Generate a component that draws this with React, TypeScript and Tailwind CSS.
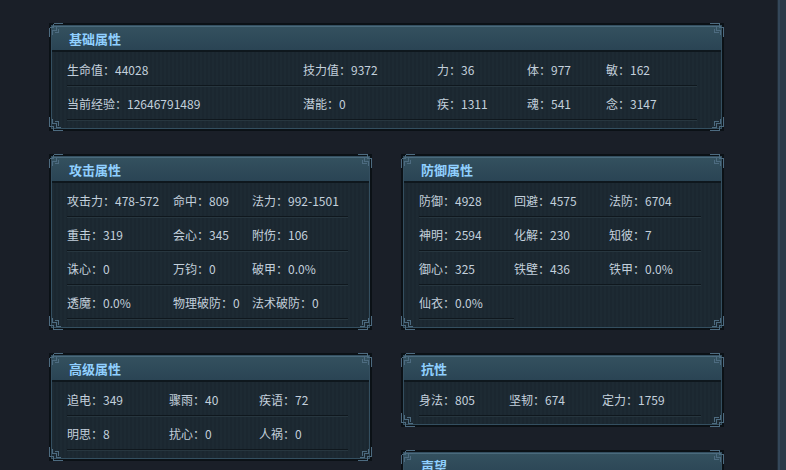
import React from 'react';

type Stat = [string, string];

function Corner({ className }: { className: string }) {
  return (
    <svg
      className={`absolute h-[14px] w-[14px] ${className}`}
      viewBox="0 0 14 14"
      fill="none"
      stroke="#4d6b80"
      strokeWidth="1"
      shapeRendering="crispEdges"
    >
      <path d="M0 0H14V2H2V14H0Z" fill="#0b1116" stroke="none" />
      <path d="M4.5 0.5H14M0.5 4.5V14M4.5 0.5V4.5H0.5" />
      <path d="M3.5 12V7.5H7.5V3.5H12" />
      <path d="M5.5 9.5H9.5V5.5" />
    </svg>
  );
}

function Panel({ title, children }: { title: string; children?: React.ReactNode }) {
  return (
    <div className="relative border-2 border-[#0b1116]">
      <div className="border border-[#344f60] bg-[repeating-linear-gradient(90deg,#1d2a33_0_2px,#1b2730_2px_4px)]">
        <div className="flex h-[26px] items-center border-b-2 border-[#0e171d] bg-gradient-to-b from-[#34515f] to-[#2a4454] pl-[17px] text-[13px] font-bold text-[#90d0ff] shadow-[inset_0_1px_0_#4a6a7c]">
          {title}
        </div>
        <div className="pb-[8px] pl-[15px]">{children}</div>
      </div>
      <Corner className="-left-[2px] -top-[2px]" />
      <Corner className="-right-[2px] -top-[2px] -scale-x-100" />
      <Corner className="-bottom-[2px] -left-[2px] -scale-y-100" />
      <Corner className="-bottom-[2px] -right-[2px] rotate-180" />
    </div>
  );
}

function Cell({ stat }: { stat: Stat }) {
  return (
    <div className="flex h-[34px] items-center whitespace-nowrap border-b border-[#0f171d] pt-[3px] shadow-[0_1px_0_#27363f]">
      <span>{stat[0]}：</span>
      <span>{stat[1]}</span>
    </div>
  );
}

const basic: Stat[] = [
  ['生命值', '44028'],
  ['技力值', '9372'],
  ['力', '36'],
  ['体', '977'],
  ['敏', '162'],
  ['当前经验', '12646791489'],
  ['潜能', '0'],
  ['疾', '1311'],
  ['魂', '541'],
  ['念', '3147'],
];

const attack: Stat[] = [
  ['攻击力', '478-572'],
  ['命中', '809'],
  ['法力', '992-1501'],
  ['重击', '319'],
  ['会心', '345'],
  ['附伤', '106'],
  ['诛心', '0'],
  ['万钧', '0'],
  ['破甲', '0.0%'],
  ['透魔', '0.0%'],
  ['物理破防', '0'],
  ['法术破防', '0'],
];

const defense: Stat[] = [
  ['防御', '4928'],
  ['回避', '4575'],
  ['法防', '6704'],
  ['神明', '2594'],
  ['化解', '230'],
  ['知彼', '7'],
  ['御心', '325'],
  ['铁壁', '436'],
  ['铁甲', '0.0%'],
  ['仙衣', '0.0%'],
];

const advanced: Stat[] = [
  ['追电', '349'],
  ['骤雨', '40'],
  ['疾语', '72'],
  ['明思', '8'],
  ['扰心', '0'],
  ['人祸', '0'],
];

const resist: Stat[] = [
  ['身法', '805'],
  ['坚韧', '674'],
  ['定力', '1759'],
];

export default function App() {
  return (
    <div className="flex h-[470px] w-[786px] overflow-hidden bg-[#1a1f28] font-['Noto_Sans_CJK_SC',sans-serif] text-[12px] leading-none text-[#c3d0dc]">
      <div className="flex-1 pl-[49px] pt-[23px]">
        <div className="flex w-[675px] flex-col gap-[23px]">
          <Panel title="基础属性">
            <div className="grid w-[630px] grid-cols-[236px_134px_90px_79px_91px]">
              {basic.map((s) => (
                <Cell key={s[0]} stat={s} />
              ))}
            </div>
          </Panel>
          <div className="flex items-start gap-[29px]">
            <div className="flex w-[323px] flex-col gap-[23px]">
              <Panel title="攻击属性">
                <div className="grid grid-cols-[106px_79px_96px]">
                  {attack.map((s) => (
                    <Cell key={s[0]} stat={s} />
                  ))}
                </div>
              </Panel>
              <Panel title="高级属性">
                <div className="grid grid-cols-[102px_90px_89px]">
                  {advanced.map((s) => (
                    <Cell key={s[0]} stat={s} />
                  ))}
                </div>
              </Panel>
            </div>
            <div className="flex w-[323px] flex-col gap-[23px]">
              <Panel title="防御属性">
                <div className="grid grid-cols-[95px_95px_92px]">
                  {defense.map((s) => (
                    <Cell key={s[0]} stat={s} />
                  ))}
                </div>
              </Panel>
              <Panel title="抗性">
                <div className="grid grid-cols-[90px_93px_99px]">
                  {resist.map((s) => (
                    <Cell key={s[0]} stat={s} />
                  ))}
                </div>
              </Panel>
              <Panel title="声望">
                <div className="h-[60px]" />
              </Panel>
            </div>
          </div>
        </div>
      </div>
      <div className="flex w-[9px] border-l border-[#222d38] bg-[#2b3a48]">
        <div className="w-[2px] bg-[#34475a]" />
      </div>
    </div>
  );
}
